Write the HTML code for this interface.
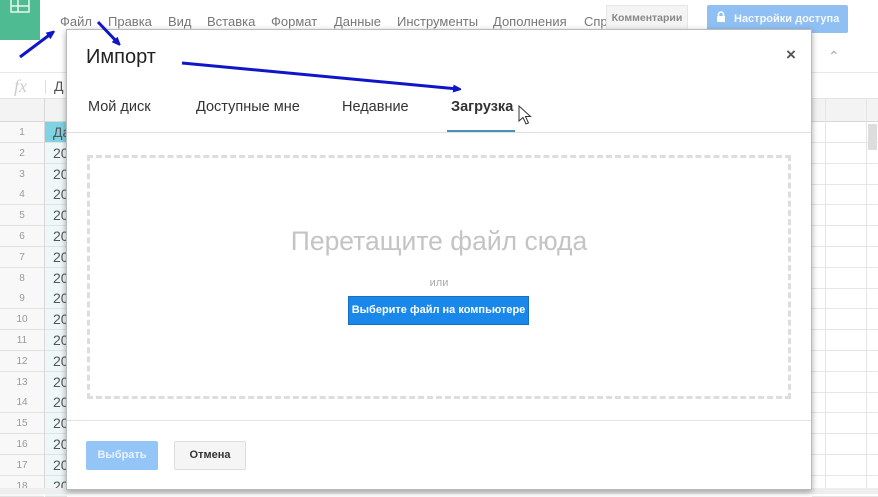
<!DOCTYPE html><html><head><meta charset="utf-8"><style>
*{margin:0;padding:0;box-sizing:border-box}
body{width:878px;height:494px;overflow:hidden;background:#fff;font-family:"Liberation Sans","Noto Sans CJK SC",sans-serif;position:relative}
.a{position:absolute}
.menu span{position:absolute;top:14px;font-size:13px;color:#777}
.rn{position:absolute;left:0;width:44px;height:21px;border-bottom:1px solid #e2e2e2;font-size:10px;color:#999;text-align:center;line-height:21px;background:#f8f8f8}
.ca{position:absolute;left:45px;width:22px;height:21px;border-bottom:1px solid #e2e2e2;font-size:14px;color:#555;line-height:21px;padding-left:8px;background:#eef8f8;overflow:hidden}
.tab{position:absolute;top:99px;font-size:14.5px;color:#333}
</style></head><body>
<div class="a" style="left:0;top:0;width:40px;height:40px;background:#4fbb93"></div>
<svg class="a" style="left:10px;top:0" width="22" height="16"><rect x="1" y="-2" width="18" height="14" fill="none" stroke="#e8f6ef" stroke-width="1.5"/><line x1="1" y1="6" x2="19" y2="6" stroke="#e8f6ef" stroke-width="1.5"/><line x1="8" y1="0" x2="8" y2="12" stroke="#e8f6ef" stroke-width="1.5"/></svg>
<div class="menu"><span style="left:60px">Файл</span><span style="left:108px">Правка</span><span style="left:168px">Вид</span><span style="left:207px">Вставка</span><span style="left:271px">Формат</span><span style="left:334px">Данные</span><span style="left:397px">Инструменты</span><span style="left:493px">Дополнения</span><span style="left:584px">Спр</span></div>
<div class="a" style="left:606px;top:5px;width:82px;height:27px;background:#f4f4f4;border:1px solid #e6e6e6;font-size:10.5px;color:#888;text-align:center;line-height:25px;font-weight:bold">Комментарии</div>
<div class="a" style="left:707px;top:5px;width:141px;height:28px;background:#90c0f3;border-radius:2px;font-size:11px;color:#f4f8ff;line-height:28px;font-weight:bold;padding-left:27px">Настройки доступа</div>
<svg class="a" style="left:716px;top:11px" width="10" height="12"><rect x="1" y="5" width="8" height="6" fill="#fff"/><path d="M2.5 5V3.5a2.5 2.5 0 0 1 5 0V5" fill="none" stroke="#fff" stroke-width="1.5"/></svg>
<div class="a" style="left:0;top:72px;width:878px;height:1px;background:#e8e8e8"></div>
<div class="a" style="left:14px;top:76px;font-size:18px;color:#ccc;font-family:'Liberation Serif',serif;font-style:italic">fx</div>
<div class="a" style="left:45px;top:80px;width:1px;height:14px;background:#ddd"></div>
<div class="a" style="left:54px;top:78px;font-size:14px;color:#555">Д</div>
<div class="a" style="left:0;top:98px;width:878px;height:24px;background:#f3f3f3;border-bottom:1px solid #d8d8d8;border-top:1px solid #e4e4e4"></div>
<div class="a" style="left:44px;top:98px;width:1px;height:396px;background:#d8d8d8"></div>
<div id="g"></div>
<script>
var s='';for(var i=1;i<=18;i++){var t=122+(i-1)*20.8;s+='<div class="rn" style="top:'+t+'px">'+i+'</div><div class="ca" style="top:'+t+'px'+(i==1?';background:#7fd3e3':'')+'">'+(i==1?'Да':'20')+'</div>';
s+='<div class="a" style="left:812px;width:66px;top:'+(t+20)+'px;height:1px;background:#e6e6e6"></div>';}
document.getElementById('g').innerHTML=s;
</script>
<div class="a" style="left:825px;top:98px;width:1px;height:396px;background:#e6e6e6"></div>
<div class="a" style="left:866px;top:98px;width:1px;height:396px;background:#e6e6e6"></div>
<div class="a" style="left:868px;top:124px;width:9px;height:26px;background:#ddd"></div>
<div class="a" style="left:828px;top:48px;font-size:14px;color:#aaa">&#8963;</div>
<div class="a" style="left:0;top:488px;width:878px;height:6px;background:#eee"></div>
<!-- dialog -->
<div class="a" style="left:66px;top:29px;width:746px;height:461px;background:#fff;box-shadow:0 2px 6px rgba(0,0,0,.35);border:1px solid #bbb"></div>
<div class="a" style="left:86px;top:46px;font-size:20px;color:#222">Импорт</div>
<div class="a" style="left:786px;top:45px;font-size:17px;color:#555;font-weight:bold">×</div>
<div class="tab" style="left:88px">Мой диск</div>
<div class="tab" style="left:196px">Доступные мне</div>
<div class="tab" style="left:342px">Недавние</div>
<div class="tab" style="left:451px;font-weight:bold">Загрузка</div>
<div class="a" style="left:447px;top:130px;width:68px;height:3px;background:#4a90b8"></div>
<div class="a" style="left:67px;top:132px;width:744px;height:1px;background:#e0e0e0"></div>
<svg class="a" style="left:518px;top:105px" width="14" height="20"><path d="M1 1V16L5 12.5L8 19L10.5 18L7.5 11.5H12.5Z" fill="#fff" stroke="#333" stroke-width="1"/></svg>
<div class="a" style="left:87px;top:155px;width:704px;height:244px;border:3px dashed #ddd"></div>
<div class="a" style="left:87px;top:226px;width:704px;text-align:center;font-size:26.5px;color:#c4c4c4">Перетащите файл сюда</div>
<div class="a" style="left:87px;top:277px;width:704px;text-align:center;font-size:11px;color:#aaa">или</div>
<div class="a" style="left:348px;top:296px;width:181px;height:29px;background:#1a87ea;border:1px solid #1470c8;color:#fff;font-size:11px;font-weight:bold;text-align:center;line-height:27px">Выберите файл на компьютере</div>
<div class="a" style="left:67px;top:420px;width:744px;height:1px;background:#e4e4e4"></div>
<div class="a" style="left:86px;top:441px;width:72px;height:29px;background:#93c5f6;border-radius:2px;color:#e8f3ff;font-size:11px;font-weight:bold;text-align:center;line-height:29px">Выбрать</div>
<div class="a" style="left:174px;top:441px;width:72px;height:29px;background:#f5f5f5;border:1px solid #ddd;border-radius:2px;color:#333;font-size:11px;font-weight:bold;text-align:center;line-height:27px">Отмена</div>
<svg class="a" style="left:0;top:0" width="878" height="494">
<defs><marker id="m" markerWidth="8" markerHeight="8" refX="5" refY="4" orient="auto" markerUnits="userSpaceOnUse"><path d="M0 0L10 4L0 8Z" fill="#1016c8"/></marker></defs>
<g stroke="#1016c8" stroke-width="3" fill="none" marker-end="url(#m)">
<line x1="20" y1="57" x2="52" y2="33"/>
<line x1="98" y1="22" x2="118" y2="43"/>
<line x1="182" y1="63" x2="458" y2="89"/>
</g></svg>
</body></html>
